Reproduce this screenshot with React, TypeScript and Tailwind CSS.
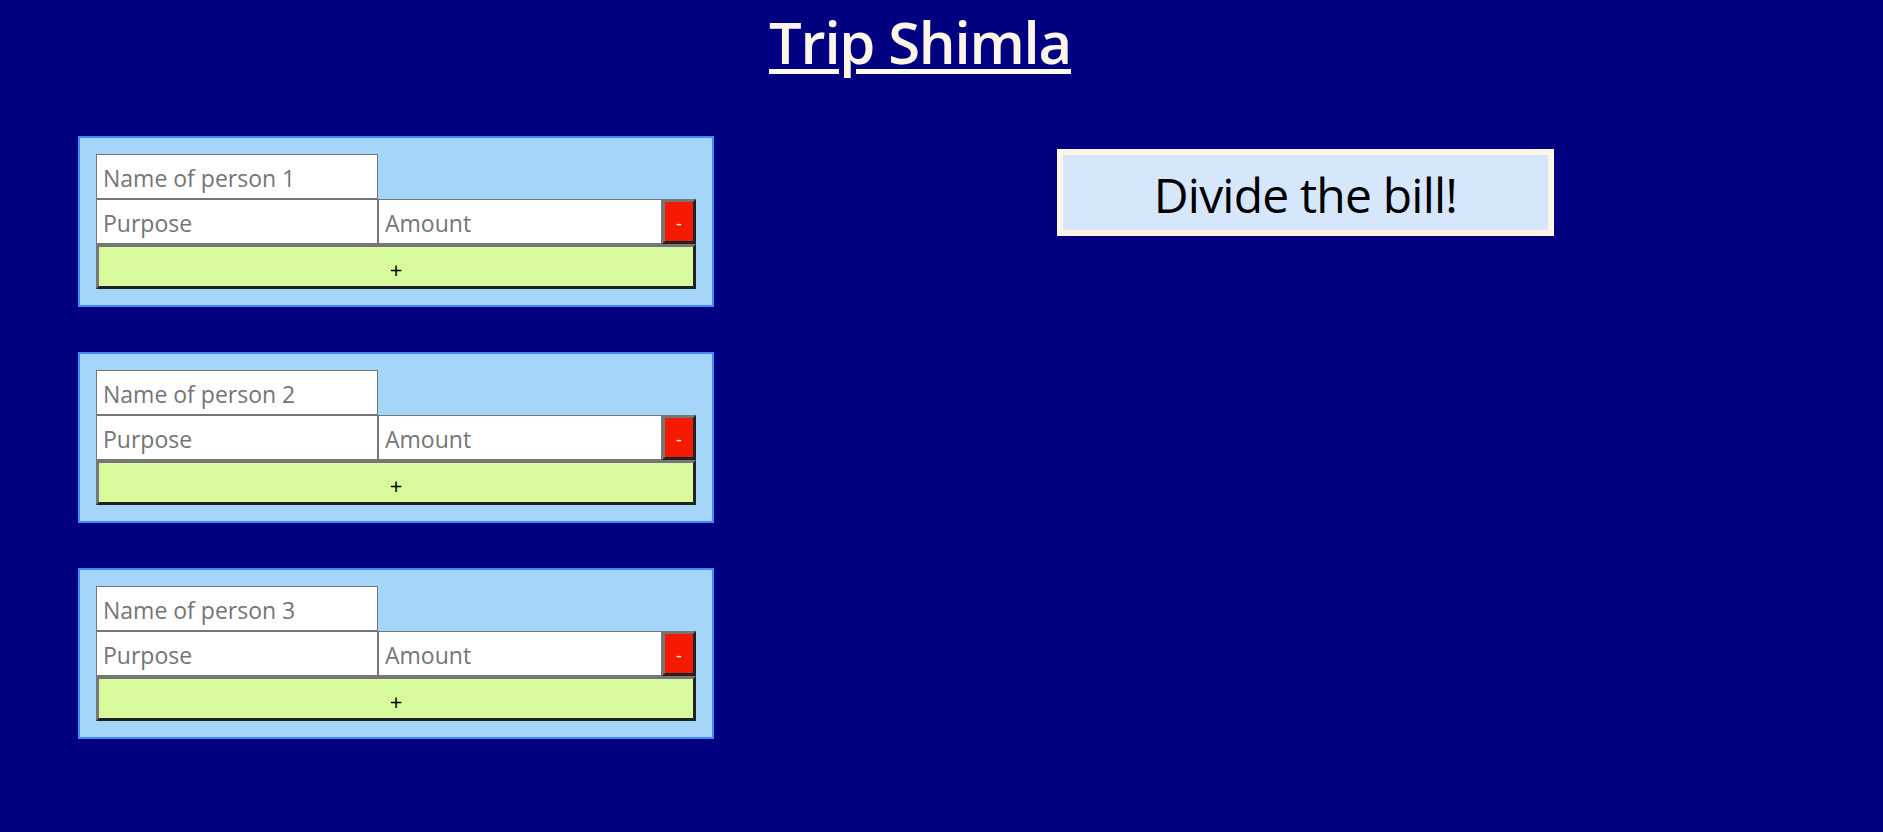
import React from "react";

const people = [1, 2, 3];

function PersonCard({ n }: { n: number }) {
  return (
    <div className="w-[636px] border-2 border-[#4189fd] bg-[#a6d5fa] p-4">
      <div className="flex flex-col">
        <input
          placeholder={`Name of person ${n}`}
          className="h-[45px] w-[282px] border border-[#767676] bg-white px-[6px] pt-[2px] text-[23px] outline-none placeholder:text-[#757575]"
        />
        <div className="flex">
          <input
            placeholder="Purpose"
            className="h-[45px] w-[282px] border border-[#767676] bg-white px-[6px] pt-[2px] text-[23px] outline-none placeholder:text-[#757575]"
          />
          <input
            placeholder="Amount"
            className="h-[45px] w-[284px] border border-[#767676] bg-white px-[6px] pt-[2px] text-[23px] outline-none placeholder:text-[#757575]"
          />
          <button className="flex h-[45px] w-[34px] items-center justify-center border-[3px] border-t-[#767676] border-r-[#222] border-b-[#222] border-l-[#767676] bg-[#f51a00] pt-[3px] text-[18px] text-white">
            -
          </button>
        </div>
        <button className="h-[45px] w-full border-[3px] border-t-[#767676] border-r-[#222] border-b-[#222] border-l-[#767676] bg-[#d9f99d] pt-[4px] text-[22px] leading-none text-black">
          +
        </button>
      </div>
    </div>
  );
}

export default function App() {
  return (
    <div className="min-h-[832px] bg-[#000080] font-['Open_Sans',sans-serif]">
      <div className="flex justify-center pr-[43px] pt-[2px]">
        <h1 className="text-[58px] font-semibold leading-[80px] tracking-[-1.2px] text-[#fdf5e6] underline decoration-[#fffaf0] decoration-[5px] underline-offset-[5px]">
          Trip Shimla
        </h1>
      </div>
      <div className="mt-[54px] flex items-start gap-[343px] pl-[78px]">
        <div className="flex flex-col gap-[45px]">
          {people.map((n) => (
            <PersonCard key={n} n={n} />
          ))}
        </div>
        <button className="mt-[13px] flex h-[87px] w-[497px] items-center justify-center border-[6px] border-[#fdf5e6] bg-[#d6e6fb] pt-[5px] text-[48px] tracking-[-0.8px] text-black">
          Divide the bill!
        </button>
      </div>
    </div>
  );
}
